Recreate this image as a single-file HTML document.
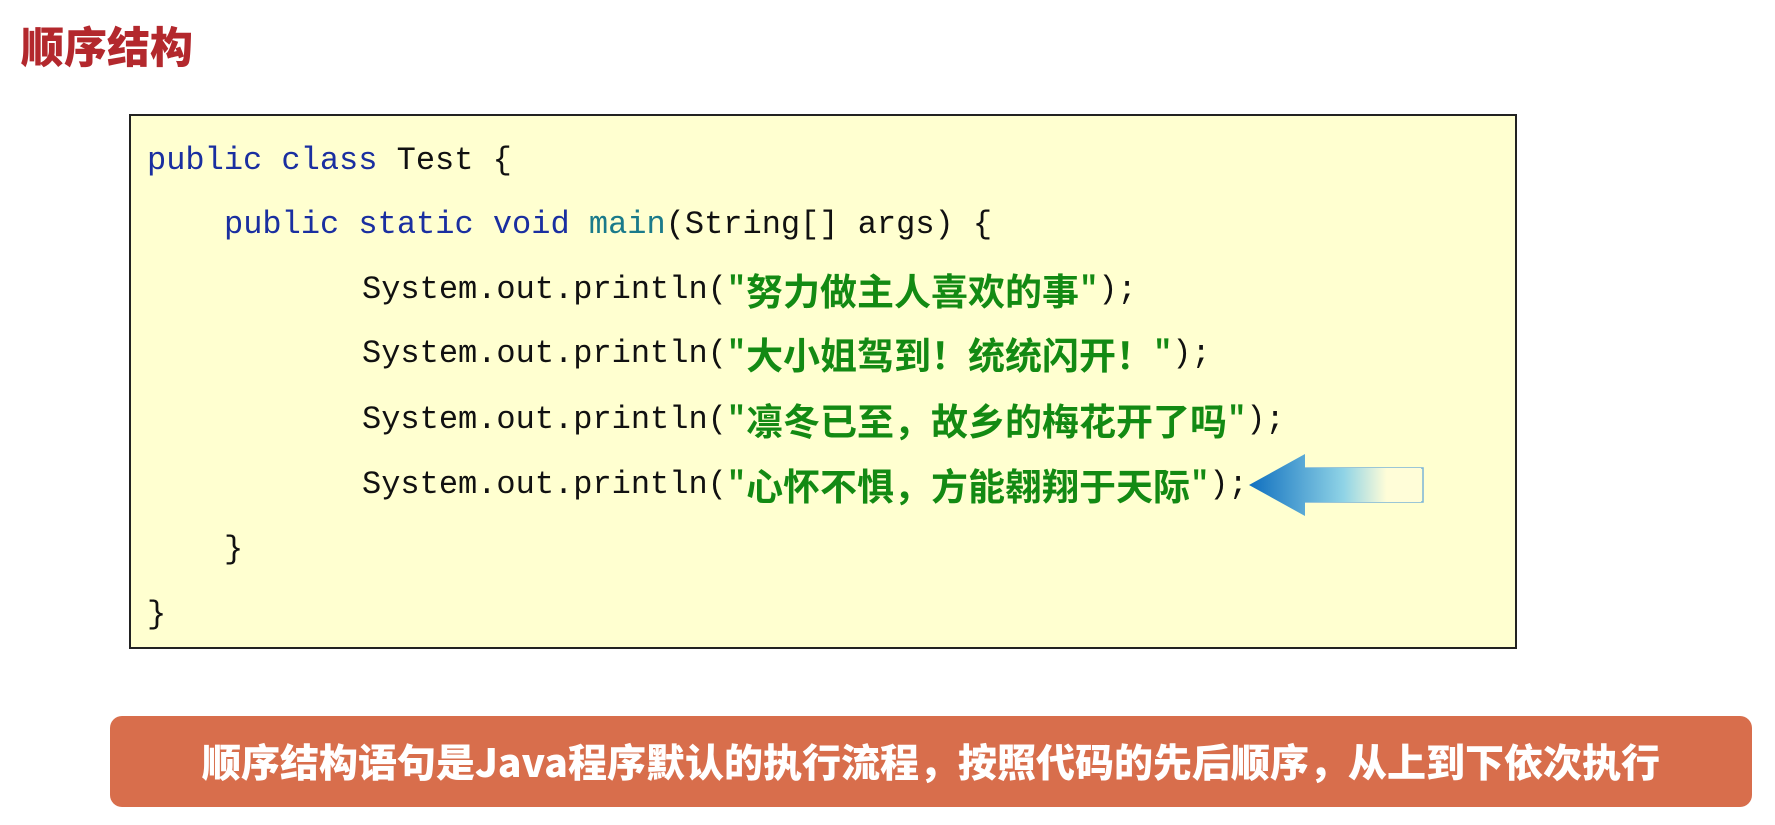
<!DOCTYPE html>
<html><head><meta charset="utf-8"><style>
body{margin:0;width:1775px;height:825px;background:#fff;position:relative;overflow:hidden;font-family:"Liberation Sans","Noto Sans CJK SC",sans-serif}
.title{position:absolute;left:21px;top:14px;font-size:43px;font-weight:900;color:#b3282d;font-family:"Noto Sans CJK SC",sans-serif}
.box{position:absolute;left:129px;top:114px;width:1384px;height:531px;background:#ffffd0;border:2px solid #222}
.ln{position:absolute;font-family:"Liberation Mono","Noto Sans CJK SC",monospace;font-size:32px;color:#111;white-space:pre;line-height:40px;height:40px}
.k{color:#1a2fa0}.m{color:#1a7a8a}
.q{color:#138a13;font-weight:bold}
.s{color:#138a13;font-weight:bold;font-family:"Noto Sans CJK SC",sans-serif;font-size:37px;line-height:40px;vertical-align:top;position:relative;top:-1px}
.banner{position:absolute;left:110px;top:716px;width:1642px;height:91px;background:#d86e4c;border-radius:12px;color:#fff;font-weight:900;font-size:39px;text-align:center;line-height:91px;font-family:"Noto Sans CJK SC",sans-serif}
</style></head><body>
<div class="title">顺序结构</div>
<div class="box"></div>
<div class="ln" style="left:147px;top:141px"><span class="k">public class</span> Test {</div>
<div class="ln" style="left:224px;top:205px"><span class="k">public static void</span> <span class="m">main</span>(String[] args) {</div>
<div class="ln" style="left:362px;top:270px">System.out.println(<span class="q">"</span><span class="s">努力做主人喜欢的事</span><span class="q">"</span>);</div>
<div class="ln" style="left:362px;top:334px">System.out.println(<span class="q">"</span><span class="s">大小姐驾到！统统闪开！</span><span class="q">"</span>);</div>
<div class="ln" style="left:362px;top:400px">System.out.println(<span class="q">"</span><span class="s">凛冬已至，故乡的梅花开了吗</span><span class="q">"</span>);</div>
<div class="ln" style="left:362px;top:465px">System.out.println(<span class="q">"</span><span class="s">心怀不惧，方能翱翔于天际</span><span class="q">"</span>);</div>
<div class="ln" style="left:224px;top:530px">}</div>
<div class="ln" style="left:147px;top:595px">}</div>
<svg style="position:absolute;left:1245px;top:450px" width="185" height="70">
<defs><linearGradient id="g" x1="0" x2="1"><stop offset="0" stop-color="#0f6fbf"/><stop offset="0.55" stop-color="#8fd3e6"/><stop offset="0.8" stop-color="#fffdd8"/></linearGradient></defs>
<rect x="58" y="18" width="120" height="34" fill="none" stroke="#7ab4d8" stroke-width="1.5"/>
<path d="M4 35 L60 4 L60 18 L176 18 L176 52 L60 52 L60 66 Z" fill="url(#g)"/>
</svg>
<div class="banner">顺序结构语句是Java程序默认的执行流程，按照代码的先后顺序，从上到下依次执行</div>
</body></html>
